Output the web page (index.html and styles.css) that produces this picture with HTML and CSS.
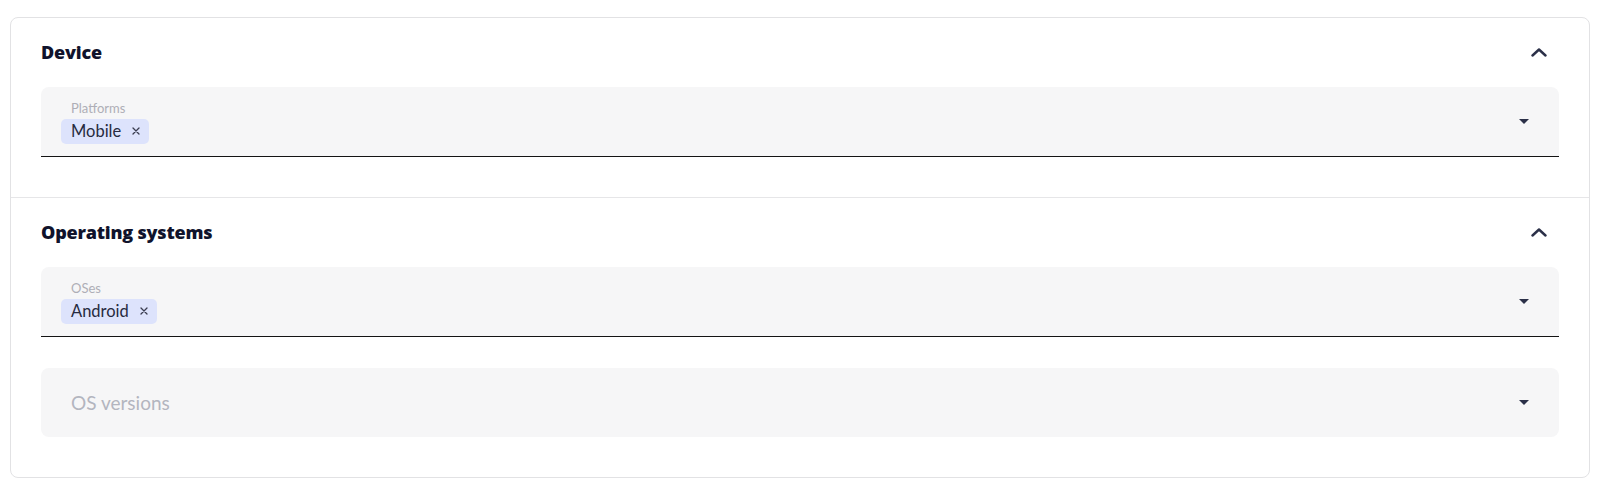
FILE: index.html
```html
<!DOCTYPE html>
<html lang="en">
<head>
  <meta charset="UTF-8" />
  <title>Targeting</title>
  <link rel="stylesheet" href="styles.css">
</head>
<body>
  <div class="card">
    <section class="section">
      <div class="section-head">
        <h2>Device</h2>
        <button class="collapse-btn" aria-label="Collapse">
          <svg width="16" height="9" viewBox="0 0 16 9"><polyline points="1.5,7.5 8,1.5 14.5,7.5" fill="none" stroke="#2b3048" stroke-width="2.4" stroke-linecap="round" stroke-linejoin="round"/></svg>
        </button>
      </div>
      <div class="field filled">
        <div class="field-body">
          <div class="field-label">Platforms</div>
          <div class="chips">
            <span class="chip">Mobile
              <svg class="chip-x" width="8" height="8" viewBox="0 0 8 8"><path d="M1 1L7 7M7 1L1 7" stroke="#3a3d50" stroke-width="1.3" stroke-linecap="round"/></svg>
            </span>
          </div>
        </div>
        <span class="caret"></span>
      </div>
    </section>

    <section class="section">
      <div class="section-head">
        <h2>Operating systems</h2>
        <button class="collapse-btn" aria-label="Collapse">
          <svg width="16" height="9" viewBox="0 0 16 9"><polyline points="1.5,7.5 8,1.5 14.5,7.5" fill="none" stroke="#2b3048" stroke-width="2.4" stroke-linecap="round" stroke-linejoin="round"/></svg>
        </button>
      </div>
      <div class="field filled">
        <div class="field-body">
          <div class="field-label">OSes</div>
          <div class="chips">
            <span class="chip">Android
              <svg class="chip-x" width="8" height="8" viewBox="0 0 8 8"><path d="M1 1L7 7M7 1L1 7" stroke="#3a3d50" stroke-width="1.3" stroke-linecap="round"/></svg>
            </span>
          </div>
        </div>
        <span class="caret"></span>
      </div>
      <div class="field empty">
        <div class="field-body">
          <div class="placeholder">OS versions</div>
        </div>
        <span class="caret"></span>
      </div>
    </section>
  </div>
</body>
</html>
```

FILE: styles.css
```css
body {
  font-family: Lato, "Open Sans", sans-serif;
  margin: 0;
  padding: 17px 10px 0 10px;
  background-color: #fff;
  color: #14172e;
}
.card {
  border: 1px solid #e2e2e4;
  border-radius: 8px;
}
.section {
  padding: 22px 30px 40px 30px;
}
.section + .section {
  border-top: 1px solid #e6e6e8;
}
.section-head {
  display: flex;
  align-items: center;
  justify-content: space-between;
  height: 24px;
  margin-bottom: 23px;
}
.section-head h2 {
  margin: 0;
  font-family: "Open Sans", Lato, sans-serif;
  font-size: 18px;
  font-weight: 800;
  letter-spacing: -0.2px;
  color: #10132c;
}
.collapse-btn {
  border: none;
  background: none;
  padding: 0;
  margin-right: 12px;
  width: 16px;
  height: 24px;
  display: flex;
  align-items: center;
  cursor: pointer;
}

.field {
  display: flex;
  align-items: center;
  height: 69px;
  box-sizing: border-box;
  background-color: #f6f6f7;
  border-radius: 8px 8px 0 0;
  padding: 0 30px 0 20px;
}
.field.filled {
  height: 70px;
  border-bottom: 1px solid #141414;
}
.field.empty {
  border-radius: 8px;
  margin-top: 31px;
}
.field-body {
  flex: 1;
}
.field-label {
  font-size: 13px;
  line-height: 16px;
  color: #aeaeb6;
  margin-left: 10px;
  margin-bottom: 3px;
}
.chips {
  display: flex;
  gap: 6px;
}
.chip {
  display: inline-flex;
  align-items: center;
  gap: 11px;
  height: 25px;
  padding: 0 9px 0 10px;
  border-radius: 5px;
  background-color: #dde3fc;
  color: #272b40;
  font-size: 16.5px;
}
.placeholder {
  font-size: 19px;
  color: #b3b5bf;
  margin-left: 10px;
}
.caret {
  width: 0;
  height: 0;
  border-left: 5.5px solid transparent;
  border-right: 5.5px solid transparent;
  border-top: 5px solid #2b3048;
}
```
